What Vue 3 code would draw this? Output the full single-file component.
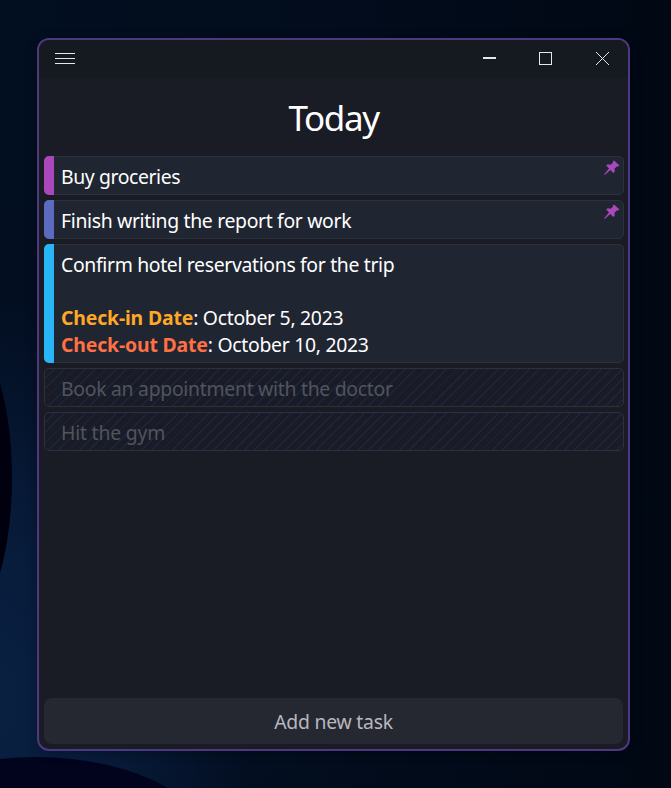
<script setup>
const tasks = [
  { id: 1, tone: 'purple', pinned: true, lines: [{ text: 'Buy groceries', fit: 'tight' }] },
  { id: 2, tone: 'indigo', pinned: true, lines: [{ text: 'Finish writing the report for work', fit: 'snug' }] },
  {
    id: 3,
    tone: 'sky',
    lines: [
      { text: 'Confirm hotel reservations for the trip', fit: 'snug' },
      { text: '', fit: 'blank' },
      { label: 'Check-in Date', tone: 'amber', text: ': October 5, 2023', fit: 'normal' },
      { label: 'Check-out Date', tone: 'coral', text: ': October 10, 2023', fit: 'normal' },
    ],
  },
  { id: 4, done: true, lines: [{ text: 'Book an appointment with the doctor', fit: 'normal' }] },
  { id: 5, done: true, lines: [{ text: 'Hit the gym', fit: 'loose' }] },
]
</script>

<template>
  <div class="desktop">
    <svg class="wallpaper" width="671" height="788" viewBox="0 0 671 788" aria-hidden="true">
      <ellipse cx="-46" cy="478" rx="58" ry="156" fill="#01000f" />
      <ellipse cx="36" cy="857" rx="182" ry="100" fill="#01041c" />
    </svg>
    <main class="window">
      <header class="titlebar">
        <button class="tool menu" aria-label="Menu">
          <svg width="20" height="13" viewBox="0 0 20 13" shape-rendering="crispEdges"><path d="M0 1.5h20M0 6.5h20M0 11.5h20" /></svg>
        </button>
        <div class="controls">
          <button class="tool" aria-label="Minimize">
            <svg width="13" height="13" viewBox="0 0 13 13" shape-rendering="crispEdges"><path d="M0 6h13" stroke-width="2" /></svg>
          </button>
          <button class="tool" aria-label="Maximize">
            <svg width="13" height="13" viewBox="0 0 13 13" shape-rendering="crispEdges"><path d="M.5.5h12v12H.5z" /></svg>
          </button>
          <button class="tool close" aria-label="Close">
            <svg width="13" height="13" viewBox="0 0 13 13"><path d="M0 0l13 13M13 0L0 13" /></svg>
          </button>
        </div>
      </header>
      <h1>Today</h1>
      <ul class="tasks">
        <li v-for="task in tasks" :key="task.id" class="task" :class="[task.tone, { done: task.done }]">
          <p v-for="(line, i) in task.lines" :key="i" :class="line.fit"><span v-if="line.label" class="label" :class="line.tone">{{ line.label }}</span><span>{{ line.text }}</span></p>
          <svg v-if="task.pinned" class="pin" width="16" height="16" viewBox="0 0 16 16">
            <path d="M10 .5l5.500 5-1.400 1.100-1.300-.200-2.300 2.400.300 2.700-1.400 1.400-3.100-3L1 14.700l-.800.100.200-.900 4.600-5.300-2.800-3 1.500-1.300 3 .400 2.400-2.300-.300-1z" />
          </svg>
        </li>
      </ul>
      <button class="add"><span>Add new task</span></button>
    </main>
  </div>
</template>

<style>
body {
  margin: 0;
}
</style>

<style scoped>
* {
  box-sizing: border-box;
}
.desktop {
  position: relative;
  width: 671px;
  height: 788px;
  padding: 38px 41px 37px 37px;
  overflow: hidden;
  font-family: "Noto Sans", sans-serif;
  background:
    radial-gradient(ellipse 380px 560px at -10px 700px, #0a2143 0%, #071a38 35%, rgba(3, 14, 34, 0.6) 70%, transparent 100%),
    linear-gradient(90deg, #020f20 0%, #020c1c 50%, #010814 100%);
}
.wallpaper {
  position: absolute;
  inset: 0;
}
.window {
  position: relative;
  display: flex;
  flex-direction: column;
  width: 593px;
  height: 713px;
  padding-bottom: 5px;
  overflow: hidden;
  border: 2px solid #4e3880;
  border-radius: 12px;
  background: #191c25;
  box-shadow: 0 2px 12px rgba(0, 0, 0, 0.3);
}
.titlebar {
  display: flex;
  justify-content: space-between;
  height: 38px;
  flex: none;
  background: #151920;
}
button {
  margin: 0;
  padding: 0;
  border: 0;
  font: inherit;
  background: none;
}
.controls {
  display: flex;
  gap: 5px;
}
.tool {
  display: grid;
  place-items: center;
  width: 51px;
  height: 37px;
}
.menu {
  width: 52px;
}
.close {
  margin-left: 1px;
}
.tool path {
  fill: none;
  stroke: #e2e8ec;
}
h1 {
  margin: 0;
  height: 78px;
  padding-top: 1px;
  color: #fff;
  font-size: 35px;
  font-weight: 400;
  line-height: 78px;
  letter-spacing: -1.400px;
  text-align: center;
}
.tasks {
  display: flex;
  flex: 1;
  flex-direction: column;
  gap: 5px;
  margin: 0;
  padding: 0 4px 0 5px;
  list-style: none;
}
.task {
  position: relative;
  padding: 6px 16px 4px;
  border: 1px solid #2d313d;
  border-radius: 5px;
  background: #202532;
  color: #fff;
  font-size: 19.400px;
}
.task::before {
  content: "";
  position: absolute;
  inset: -1px auto -1px -1px;
  width: 10px;
  border-radius: 5px 0 0 5px;
}
.purple::before {
  background: #ab47bc;
}
.indigo::before {
  background: #5c6bc0;
}
.sky::before {
  background: #29b6f6;
}
.task.done {
  color: #50545d;
  background: repeating-linear-gradient(135deg, #191c26 0 6px, #20243a 6px 7.300px);
}
.task.done::before {
  display: none;
}
p {
  height: 27px;
  margin: 0;
  line-height: 27px;
  white-space: nowrap;
}
.blank {
  height: 26px;
}
.tight {
  letter-spacing: -0.400px;
}
.snug {
  letter-spacing: -0.335px;
}
.normal {
  letter-spacing: -0.290px;
}
.loose {
  letter-spacing: -0.200px;
}
.label {
  font-weight: 700;
  letter-spacing: -0.150px;
}
.amber {
  color: #ffa726;
}
.coral {
  color: #ff7043;
}
.pin {
  position: absolute;
  top: 3px;
  right: 3px;
  fill: #ab47bc;
}
.add {
  height: 46px;
  flex: none;
  margin: 0 5px;
  border-radius: 8px;
  background: #252731;
  color: #b7b8bd;
  font-size: 19.400px;
  letter-spacing: -0.250px;
}
</style>
